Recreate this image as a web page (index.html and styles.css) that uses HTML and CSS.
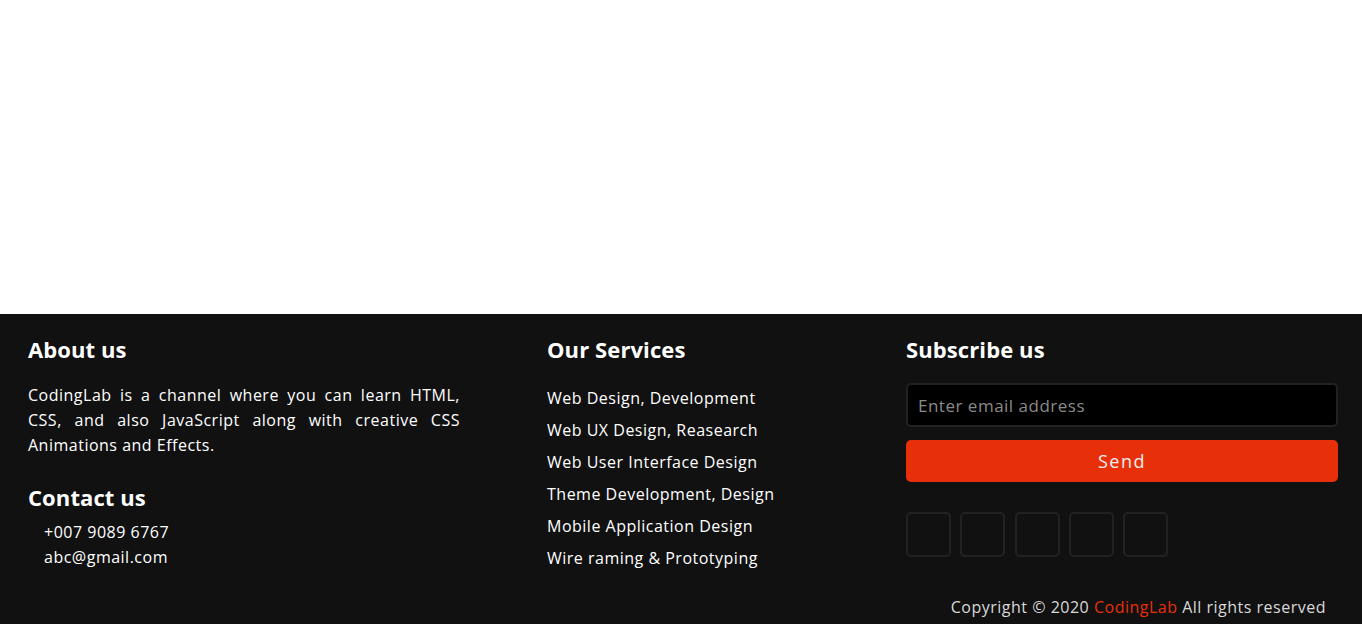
FILE: index.html
```html
<!DOCTYPE html>
<html lang="en">
<head>
<meta charset="utf-8">
<title>Footer</title>
<link rel="stylesheet" href="styles.css">
</head>
<body>
<div class="page"></div>
<footer class="footer">
  <div class="columns">
    <div class="col col-left">
      <h2 class="title">About us</h2>
      <p class="about">CodingLab is a channel where you can learn HTML, CSS, and also JavaScript along with creative CSS Animations and Effects.</p>
      <h2 class="title title-contact">Contact us</h2>
      <ul class="contact">
        <li>+007 9089 6767</li>
        <li>abc@gmail.com</li>
      </ul>
    </div>
    <div class="col col-mid">
      <h2 class="title">Our Services</h2>
      <ul class="services">
        <li>Web Design, Development</li>
        <li>Web UX Design, Reasearch</li>
        <li>Web User Interface Design</li>
        <li>Theme Development, Design</li>
        <li>Mobile Application Design</li>
        <li>Wire raming &amp; Prototyping</li>
      </ul>
    </div>
    <div class="col col-right">
      <h2 class="title">Subscribe us</h2>
      <form class="subscribe">
        <input class="email" type="text" placeholder="Enter email address">
        <button class="send" type="button">Send</button>
      </form>
      <div class="social">
        <a class="social-box" href="#"></a>
        <a class="social-box" href="#"></a>
        <a class="social-box" href="#"></a>
        <a class="social-box" href="#"></a>
        <a class="social-box" href="#"></a>
      </div>
      <p class="copyright">Copyright © 2020 <span class="brand">CodingLab</span> All rights reserved</p>
    </div>
  </div>
</footer>
</body>
</html>
```

FILE: styles.css
```css
* { box-sizing: border-box; }
html, body { margin: 0; padding: 0; }
body {
  height: 624px;
  display: flex;
  flex-direction: column;
  background: #fff;
  font-family: "Open Sans", "Liberation Sans", sans-serif;
  letter-spacing: 0.5px;
  overflow: hidden;
}
.page { flex: 1; }
.footer {
  height: 310px;
  background: #111111;
  color: #fff;
  padding: 19px 24px 0 28px;
}
.columns {
  display: grid;
  grid-template-columns: 519px 1fr 432px;
}
.col-left { padding-right: 87px; }
.title {
  margin: 0;
  font-size: 22px;
  font-weight: 700;
  line-height: 32px;
  letter-spacing: 0.1px;
}
.about {
  margin: 18px 0 0;
  font-size: 16px;
  line-height: 25px;
  text-align: justify;
}
.title-contact { margin-top: 23px; }
.contact {
  list-style: none;
  margin: 7px 0 0;
  padding: 0 0 0 16px;
  font-size: 16px;
  line-height: 25px;
}
.services {
  list-style: none;
  margin: 17px 0 0;
  padding: 0;
  font-size: 16px;
  line-height: 32px;
}
.subscribe {
  margin-top: 18px;
  display: flex;
  flex-direction: column;
  gap: 13px;
}
.email {
  height: 44px;
  background: #000;
  border: 2px solid #222;
  border-radius: 5px;
  padding: 0 10px;
  color: #fff;
  font-family: inherit;
  font-size: 17px;
  letter-spacing: 0.5px;
  outline: none;
}
.email::placeholder { color: #8a8a8a; }
.send {
  height: 42px;
  background: #e7300a;
  border: none;
  border-radius: 5px;
  color: #eee;
  font-family: inherit;
  font-size: 18px;
  letter-spacing: 1.5px;
}
.social {
  display: flex;
  gap: 9.25px;
  margin-top: 30px;
}
.social-box {
  width: 45px;
  height: 45px;
  border: 2px solid #222;
  border-radius: 5px;
}
.copyright {
  margin: 39px 12px 0 0;
  text-align: right;
  font-size: 16px;
  color: #d9d9d9;
}
.brand { color: #e7300a; }
```
